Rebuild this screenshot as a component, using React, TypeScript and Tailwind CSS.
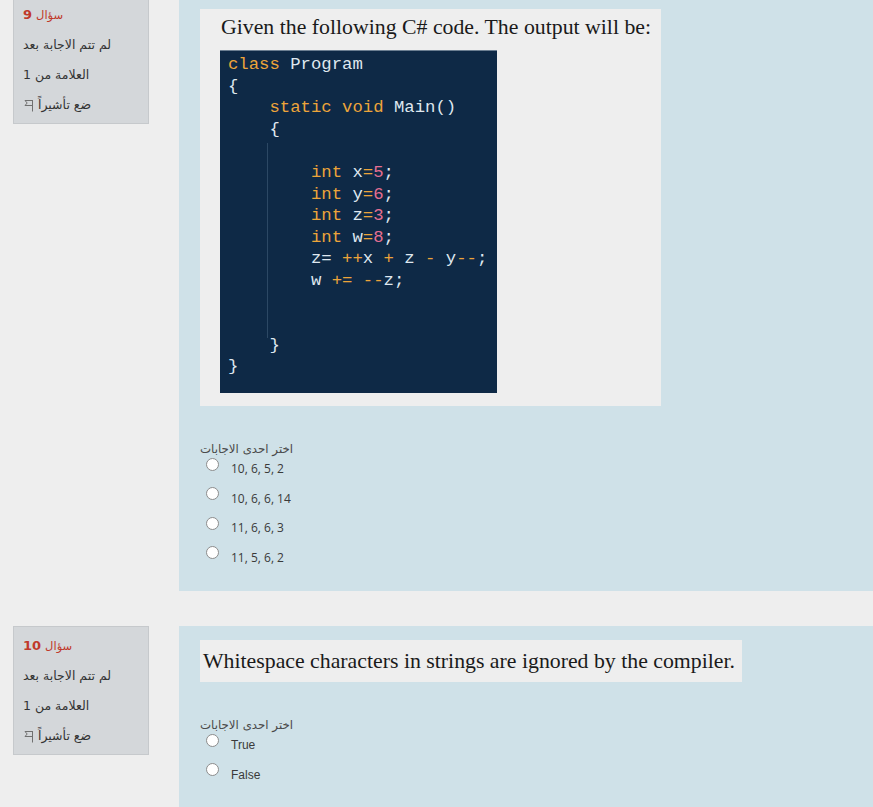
import React from "react";

type Tok = [string, string];

const K = "text-[#eca43a]";
const I = "text-[#dfe7ef]";
const N = "text-[#e56f92]";

const codeLines: Tok[][] = [
  [["class", K], [" Program", I]],
  [["{", I]],
  [["    ", I], ["static void", K], [" Main()", I]],
  [["    {", I]],
  [[" ", I]],
  [["        ", I], ["int", K], [" x", I], ["=", K], ["5", N], [";", I]],
  [["        ", I], ["int", K], [" y", I], ["=", K], ["6", N], [";", I]],
  [["        ", I], ["int", K], [" z", I], ["=", K], ["3", N], [";", I]],
  [["        ", I], ["int", K], [" w", I], ["=", K], ["8", N], [";", I]],
  [["        z= ", I], ["++", K], ["x ", I], ["+", K], [" z ", I], ["-", K], [" y", I], ["--", K], [";", I]],
  [["        w ", I], ["+=", K], [" ", I], ["--", K], ["z;", I]],
  [[" ", I]],
  [[" ", I]],
  [["    }", I]],
  [["}", I]],
];

function Flag() {
  return (
    <svg width="11" height="13" viewBox="0 0 11 13" className="inline-block align-middle">
      <path d="M9.5 1 V12.5" stroke="#707070" strokeWidth="1" fill="none" />
      <path d="M9.5 1.5 H2 L4.2 4 L2 6.5 H9.5" stroke="#707070" strokeWidth="1" fill="none" />
    </svg>
  );
}

function InfoBox({ num }: { num: string }) {
  return (
    <div className="ml-[13px] w-[136px] h-[129px] bg-[#d4d7da] border border-[#c6c9cc] pt-[4px] pl-[9px] text-[#333] text-[12.5px] leading-[30px]" style={{ fontFamily: '"DejaVu Sans", "Noto Sans", sans-serif' }}>
      <div dir="rtl" className="text-left text-[#c0392b]">
        <span className="text-[11.5px]">سؤال</span> <span className="font-bold text-[13px]">{num}</span>
      </div>
      <div dir="rtl" className="text-left">لم تتم الاجابة بعد</div>
      <div dir="rtl" className="text-left">العلامة من 1</div>
      <div dir="rtl" className="text-left">
        ضع تأشيراً <Flag />
      </div>
    </div>
  );
}

function Radio() {
  return <span className="block w-[13px] h-[13px] rounded-full border border-[#8c8c8c] bg-white shrink-0" />;
}

function Options({ items, font }: { items: string[]; font: string }) {
  return (
    <div>
      <div className="h-[20px]">
        <span dir="rtl" className="inline-block whitespace-nowrap leading-[20px] text-[11.8px] text-[#4a4a4a]" style={{ fontFamily: '"DejaVu Sans", "Noto Sans", sans-serif' }}>
          اختر احدى الاجابات
        </span>
      </div>
      {items.map((t) => (
        <div key={t} className="flex items-start h-[29.6px] pl-[6px]">
          <span className="mt-[2.5px]"><Radio /></span>
          <span className="ml-[12px] mt-[6px] leading-[16px] text-[12px] text-[#3a3a3a] whitespace-nowrap" style={{ fontFamily: font }}>
            {t}
          </span>
        </div>
      ))}
    </div>
  );
}

export default function App() {
  return (
    <div className="min-h-[807px] bg-[#eeeeee] overflow-hidden">
      <div className="mt-[-5px]">
        <div className="flex items-start">
          <div className="w-[179px] shrink-0">
            <InfoBox num="9" />
          </div>
          <div className="flex-1 h-[596px] bg-[#cfe1e8] pt-[14px] pl-[21px]">
            <div className="w-[461px] bg-[#eeeeee] pt-[3px] pb-[13px]">
              <p className="pl-[21px] text-[21.8px] leading-[30px] text-[#1a1a1a] h-[38px] whitespace-nowrap" style={{ fontFamily: '"Liberation Serif", serif' }}>
                Given the following C# code. The output will be:
              </p>
              <div className="ml-[20px] w-[277px] h-[343px] bg-[#0e2946] pt-[3px] pl-[8px] relative border-t border-[#6c7f92]">
                <div className="absolute left-[47px] top-[92px] w-px h-[195px] bg-[#2c4864]" />
                <pre className="text-[17.3px] leading-[21.6px] m-0" style={{ fontFamily: '"Liberation Mono", "DejaVu Sans Mono", monospace' }}>
                  {codeLines.map((line, i) => (
                    <div key={i}>
                      {line.map(([t, c], j) => (
                        <span key={j} className={c}>{t}</span>
                      ))}
                    </div>
                  ))}
                </pre>
              </div>
            </div>
            <div className="mt-[29px]">
              <Options items={["10, 6, 5, 2", "10, 6, 6, 14", "11, 6, 6, 3", "11, 5, 6, 2"]} font='"Open Sans", "DejaVu Sans", sans-serif' />
            </div>
          </div>
        </div>
        <div className="h-[35px]" />
        <div className="flex items-start">
          <div className="w-[179px] shrink-0">
            <InfoBox num="10" />
          </div>
          <div className="flex-1 h-[200px] bg-[#cfe1e8] pt-[14px] pl-[21px]">
            <div className="inline-block bg-[#eeeeee] pl-[3px] pr-[7px] h-[42px] leading-[42px] text-[21.8px] text-[#1a1a1a] whitespace-nowrap" style={{ fontFamily: '"Liberation Serif", serif' }}>
              Whitespace characters in strings are ignored by the compiler.
            </div>
            <div className="mt-[29px]">
              <Options items={["True", "False"]} font='"Liberation Sans", Arial, sans-serif' />
            </div>
          </div>
        </div>
      </div>
    </div>
  );
}
